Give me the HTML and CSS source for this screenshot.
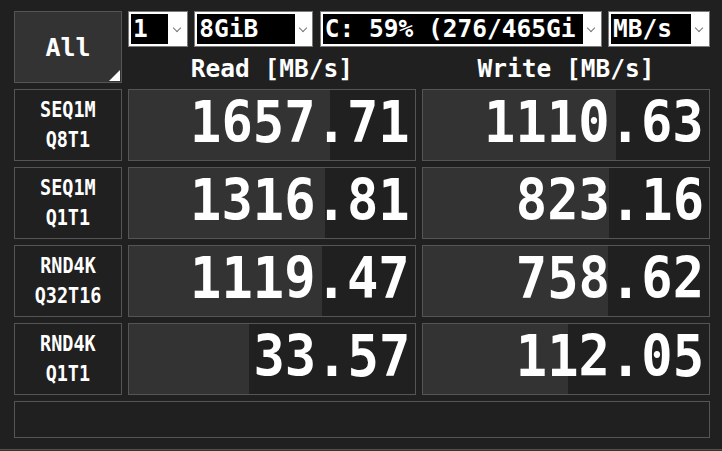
FILE: index.html
```html
<!DOCTYPE html>
<html lang="en">
<head>
    <meta charset="UTF-8">
    <meta name="viewport" content="width=device-width, initial-scale=1.0">
    <title>CrystalDiskMark</title>
    <link rel="stylesheet" href="styles.css">
</head>
<body>
    <div class="window">
        <div class="top">
            <div class="all-btn">All</div>
            <div class="top-right">
                <div class="combos">
                    <div class="combo combo-count"><span class="combo-text">1</span><span class="combo-arrow"></span></div>
                    <div class="combo combo-size"><span class="combo-text">8GiB</span><span class="combo-arrow"></span></div>
                    <div class="combo combo-drive"><span class="combo-text">C: 59% (276/465Gi</span><span class="combo-arrow"></span></div>
                    <div class="combo combo-unit"><span class="combo-text">MB/s</span><span class="combo-arrow"></span></div>
                </div>
                <div class="headers">
                    <div class="header">Read [MB/s]</div>
                    <div class="header">Write [MB/s]</div>
                </div>
            </div>
        </div>

        <div class="results">
            <div class="label"><span>SEQ1M<br>Q8T1</span></div>
            <div class="cell"><div class="bar" style="width: 70.3%"></div><span class="value">1657.71</span></div>
            <div class="cell"><div class="bar" style="width: 67.5%"></div><span class="value">1110.63</span></div>

            <div class="label"><span>SEQ1M<br>Q1T1</span></div>
            <div class="cell"><div class="bar" style="width: 68.5%"></div><span class="value">1316.81</span></div>
            <div class="cell"><div class="bar" style="width: 65%"></div><span class="value">823.16</span></div>

            <div class="label"><span>RND4K<br>Q32T16</span></div>
            <div class="cell"><div class="bar" style="width: 67.5%"></div><span class="value">1119.47</span></div>
            <div class="cell"><div class="bar" style="width: 64.7%"></div><span class="value">758.62</span></div>

            <div class="label"><span>RND4K<br>Q1T1</span></div>
            <div class="cell"><div class="bar" style="width: 42%"></div><span class="value">33.57</span></div>
            <div class="cell"><div class="bar" style="width: 50.7%"></div><span class="value">112.05</span></div>
        </div>

        <div class="comment"></div>
    </div>
</body>
</html>
```

FILE: styles.css
```css
body {
    margin: 0;
    background: #3a3328;
    font-family: 'DejaVu Sans Mono', monospace;
    color: #fff;
}
.window {
    height: 450px;
    background: #202020;
    border-bottom: 1px solid #505050;
    padding: 11px 0 0 14px;
    box-sizing: border-box;
}
.top {
    display: flex;
    gap: 6px;
}
.all-btn {
    position: relative;
    width: 108px;
    height: 72px;
    box-sizing: border-box;
    background: #333;
    border: 1px solid #555;
    display: flex;
    align-items: center;
    justify-content: center;
    font-size: 25px;
    font-weight: bold;
}
.all-btn::after {
    content: "";
    position: absolute;
    right: 1px;
    bottom: 1px;
    width: 11px;
    height: 11px;
    background: #fff;
    clip-path: polygon(100% 0, 100% 100%, 0 100%);
}
.top-right {
    width: 582px;
    display: flex;
    flex-direction: column;
}
.combos {
    display: flex;
    justify-content: space-between;
    height: 36px;
}
.combo {
    display: flex;
    box-sizing: border-box;
    height: 36px;
    background: #fff;
    border: 1px solid #7a7a7a;
    padding: 2px;
    overflow: hidden;
}
.combo-text {
    background: #000;
    font-size: 24.5px;
    font-weight: bold;
    line-height: 30px;
    padding-left: 2px;
    white-space: nowrap;
    overflow: hidden;
}
.combo-arrow {
    flex: 1;
    position: relative;
}
.combo-arrow::after {
    content: "";
    position: absolute;
    left: 50%;
    top: 11px;
    width: 5px;
    height: 5px;
    margin-left: -3px;
    border-right: 1px solid #777;
    border-bottom: 1px solid #777;
    transform: rotate(45deg);
}
.combo-count { width: 60px; }
.combo-count .combo-text { width: 35px; }
.combo-size { width: 119px; }
.combo-size .combo-text { width: 96px; }
.combo-drive { width: 282px; }
.combo-drive .combo-text { width: 258px; }
.combo-unit { width: 102px; }
.combo-unit .combo-text { width: 78px; }
.headers {
    display: flex;
    gap: 6px;
    height: 36px;
}
.header {
    flex: 1;
    text-align: center;
    font-size: 24.5px;
    font-weight: bold;
    line-height: 32px;
    padding-top: 6px;
}
.results {
    display: grid;
    grid-template-columns: 108px 288px 288px;
    grid-auto-rows: 72px;
    gap: 6px;
    margin-top: 6px;
}
.label {
    background: #202020;
    border: 1px solid #555;
    display: flex;
    align-items: center;
    justify-content: center;
    text-align: center;
    font-size: 20.5px;
    font-weight: bold;
    line-height: 30px;
}
.label span {
    transform: scaleX(0.9);
}
.cell {
    position: relative;
    background: #202020;
    border: 1px solid #555;
    display: flex;
    align-items: center;
    justify-content: flex-end;
}
.bar {
    position: absolute;
    left: 0;
    top: 0;
    bottom: 0;
    background: #333;
}
.value {
    position: relative;
    font-size: 57.6px;
    font-weight: bold;
    margin-right: 5px;
    margin-top: -5px;
    transform: scaleX(0.905);
    transform-origin: right center;
}
.comment {
    width: 696px;
    height: 37px;
    box-sizing: border-box;
    margin-top: 6px;
    background: #202020;
    border: 1px solid #555;
}
```
